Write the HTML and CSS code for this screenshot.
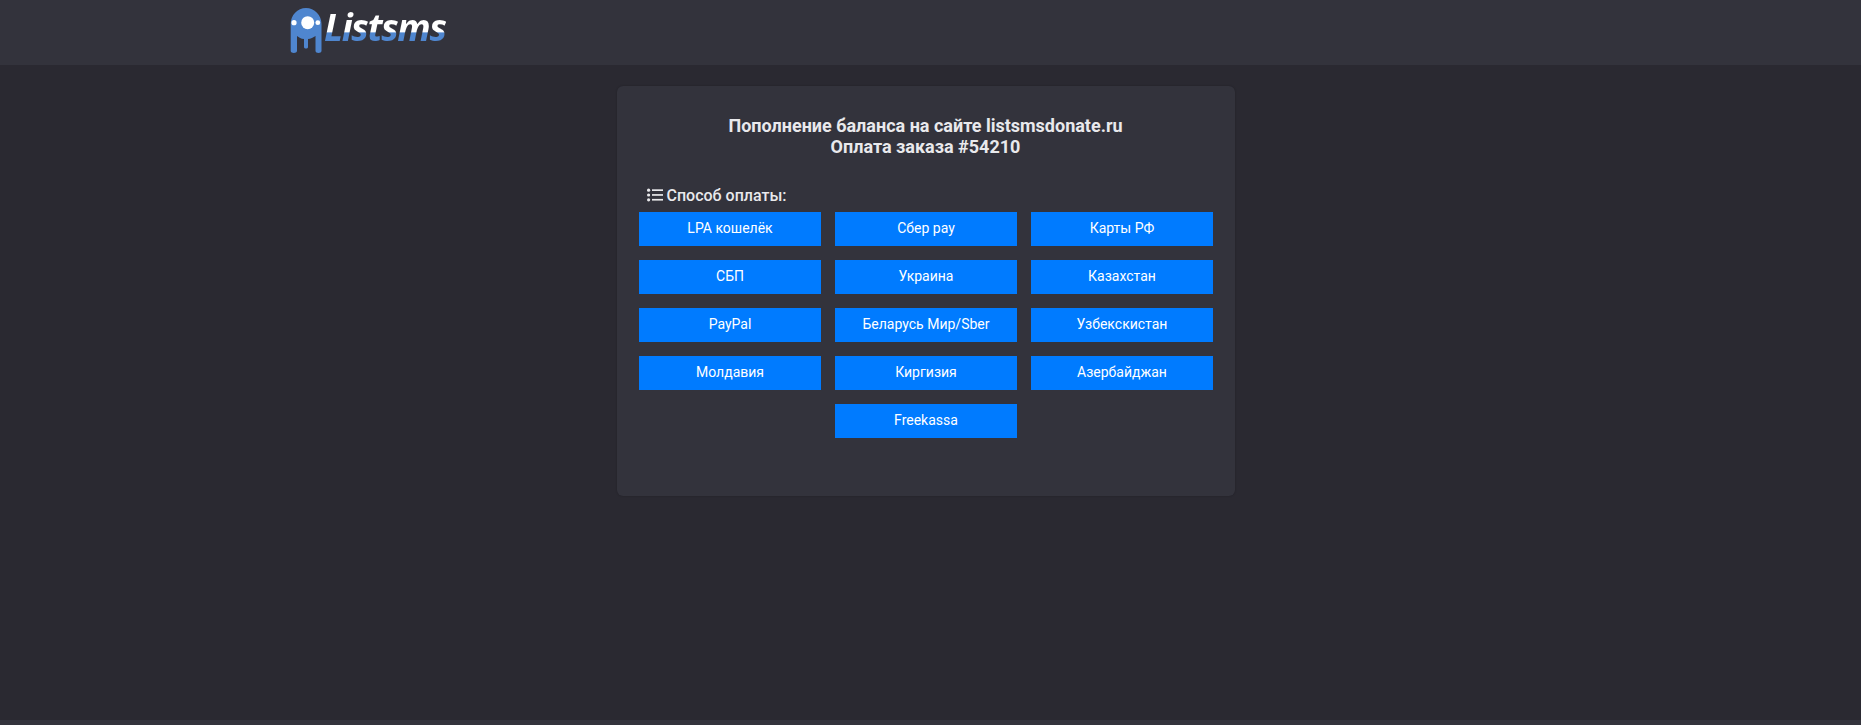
FILE: index.html
```html
<!DOCTYPE html>
<html lang="ru">
<head>
<meta charset="utf-8">
<title>Listsms</title>
<link rel="stylesheet" href="styles.css">
</head>
<body>
<header class="topbar">
  <a class="logo" href="#">
    <svg class="logo-mark" width="32" height="46" viewBox="0 0 32 46">
      <path fill="#4f86cf" d="M.7 43V16C.7 7 7.500 0 16 0S31.500 7 31.500 16V43c0 2.500-6 2.500-6 0V28c-2 1.500-5 3-7.500 3V39c0 2-4 2-4 0V31c-3 0-5-1.500-7-3V43c0 2.500-6.300 2.500-6.300 0z"/>
      <circle cx="17.700" cy="14.700" r="6.500" fill="#fff"/>
      <circle cx="4" cy="14.700" r="2.600" fill="#fff"/>
      <circle cx="27.800" cy="14.700" r="2.400" fill="#fff"/>
    </svg>
    <span class="logo-text">Listsms</span>
  </a>
</header>
<main class="page">
  <section class="card">
    <h1 class="title">Пополнение баланса на сайте listsmsdonate.ru<br>Оплата заказа #54210</h1>
    <div class="label">
      <svg class="list-icon" width="16" height="14" viewBox="0 0 16 14">
        <circle cx="1.600" cy="2.200" r="1.600"/><circle cx="1.600" cy="7" r="1.600"/><circle cx="1.600" cy="11.800" r="1.600"/>
        <rect x="5" y="1.300" width="11" height="1.700"/><rect x="5" y="6.100" width="11" height="1.700"/><rect x="5" y="10.900" width="11" height="1.700"/>
      </svg>
      <span>Способ оплаты:</span>
    </div>
    <div class="methods">
      <a class="method" href="#">LPA кошелёк</a>
      <a class="method" href="#">Сбер pay</a>
      <a class="method" href="#">Карты РФ</a>
      <a class="method" href="#">СБП</a>
      <a class="method" href="#">Украина</a>
      <a class="method" href="#">Казахстан</a>
      <a class="method" href="#">PayPal</a>
      <a class="method" href="#">Беларусь Мир/Sber</a>
      <a class="method" href="#">Узбекскистан</a>
      <a class="method" href="#">Молдавия</a>
      <a class="method" href="#">Киргизия</a>
      <a class="method" href="#">Азербайджан</a>
      <a class="method method-center" href="#">Freekassa</a>
    </div>
  </section>
</main>
<footer class="footline"></footer>
</body>
</html>
```

FILE: styles.css
```css
* { box-sizing: border-box; }
html, body { height: 100%; }
body {
  margin: 0;
  background: #2a2931;
  font-family: Roboto, "Liberation Sans", sans-serif;
  color: #e9e9ec;
  display: flex;
  flex-direction: column;
  overflow: hidden;
}
.topbar {
  height: 65px;
  flex: none;
  background: #33333c;
  padding: 8px 0 0 290px;
}
.logo {
  display: inline-flex;
  align-items: flex-start;
  text-decoration: none;
}
.logo-mark { display: block; flex: none; }
.logo-text {
  margin: 0 0 0 2px;
  font-family: "Open Sans", sans-serif;
  font-style: italic;
  font-weight: 700;
  font-size: 37px;
  line-height: 38px;
  letter-spacing: -1.4px;
  background: linear-gradient(#fff 0 62%, #4f86cf 66% 100%);
  -webkit-background-clip: text;
  background-clip: text;
  color: transparent;
}
.page {
  flex: 1;
  display: flex;
  justify-content: center;
  align-items: flex-start;
  padding: 21px 10px 0 0;
}
.card {
  width: 618px;
  height: 410px;
  background: #33333c;
  border-radius: 6px;
  padding: 29px 22px 0;
  box-shadow: 0 0 2px rgba(0, 0, 0, .25);
}
.title {
  margin: 0;
  font-size: 18px;
  font-weight: 700;
  line-height: 21px;
  text-align: center;
}
.label {
  display: flex;
  align-items: center;
  gap: 4px;
  margin: 28px 0 0 8px;
  height: 20px;
  font-size: 16px;
  font-weight: 500;
}
.list-icon { fill: #e9e9ec; flex: none; }
.methods {
  display: grid;
  grid-template-columns: repeat(3, 182px);
  grid-auto-rows: 34px;
  gap: 14px;
  margin-top: 7px;
}
.method {
  display: flex;
  align-items: center;
  justify-content: center;
  background: #007bff;
  color: #fff;
  font-size: 14px;
  text-decoration: none;
  padding: 0 0 2px 1px;
}
.method-center { grid-column: 2; }
.footline {
  height: 5px;
  flex: none;
  background: #33333c;
}
```
